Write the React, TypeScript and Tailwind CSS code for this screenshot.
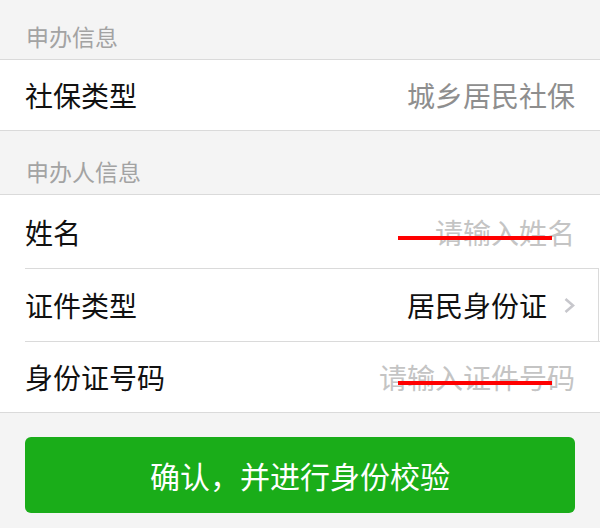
import React from "react";

const font = { fontFamily: '"Noto Sans CJK SC", "Noto Sans", sans-serif' };

function Chevron() {
  return (
    <svg width="13" height="17" viewBox="0 0 13 17" className="ml-[16px]">
      <path d="M2.5 2 L10 8.5 L2.5 15" fill="none" stroke="#c7c7cc" strokeWidth="2.6" />
    </svg>
  );
}

export default function App() {
  return (
    <div className="relative w-[600px] h-[528px] bg-[#f4f4f4] overflow-hidden" style={font}>
      {/* header 1 */}
      <div className="h-[59px] flex items-end pl-[26px] pb-[7px]">
        <span className="text-[23px] leading-[32px] text-[#a3a3a3]">申办信息</span>
      </div>
      <div className="bg-white border-y border-[#dadada]">
        <div className="h-[70px] flex items-center justify-between pl-[25px] pr-[25px]">
          <span className="text-[28px] text-[#111]">社保类型</span>
          <span className="text-[28px] text-[#8e8e8e]">城乡居民社保</span>
        </div>
      </div>
      {/* header 2 */}
      <div className="h-[63px] flex items-end pl-[26px] pb-[7px]">
        <span className="text-[23px] leading-[32px] text-[#a3a3a3]">申办人信息</span>
      </div>
      <div className="bg-white border-y border-[#dadada]">
        <div className="pl-[25px]">
          <div className="h-[73px] flex items-center justify-between pr-[25px]">
            <span className="text-[28px] text-[#111]">姓名</span>
            <span className="text-[28px] text-[#c4c4c4]">请输入姓名</span>
          </div>
        </div>
        <div className="pl-[25px] mr-[1px] border-r border-[#dadada]">
          <div className="h-[73px] flex items-center justify-between pr-[22px] border-t border-[#dadada]">
            <span className="text-[28px] text-[#111]">证件类型</span>
            <span className="flex items-center">
              <span className="text-[28px] text-[#111]">居民身份证</span>
              <Chevron />
            </span>
          </div>
        </div>
        <div className="pl-[25px]">
          <div className="h-[71px] flex items-center justify-between pr-[25px] border-t border-[#dadada]">
            <span className="text-[28px] text-[#111]">身份证号码</span>
            <span className="text-[28px] text-[#c4c4c4]">请输入证件号码</span>
          </div>
        </div>
      </div>
      <div className="px-[25px] pt-[24px]">
        <button className="w-full h-[76px] rounded-[6px] bg-[#1aad19] text-white text-[30px] flex items-center justify-center">
          确认，并进行身份校验
        </button>
      </div>
      {/* red annotation lines */}
      <div className="absolute left-[398px] top-[236px] w-[154px] h-[4px] bg-[#ff0000]" />
      <div className="absolute left-[398px] top-[381px] w-[154px] h-[4px] bg-[#ff0000]" />
    </div>
  );
}
